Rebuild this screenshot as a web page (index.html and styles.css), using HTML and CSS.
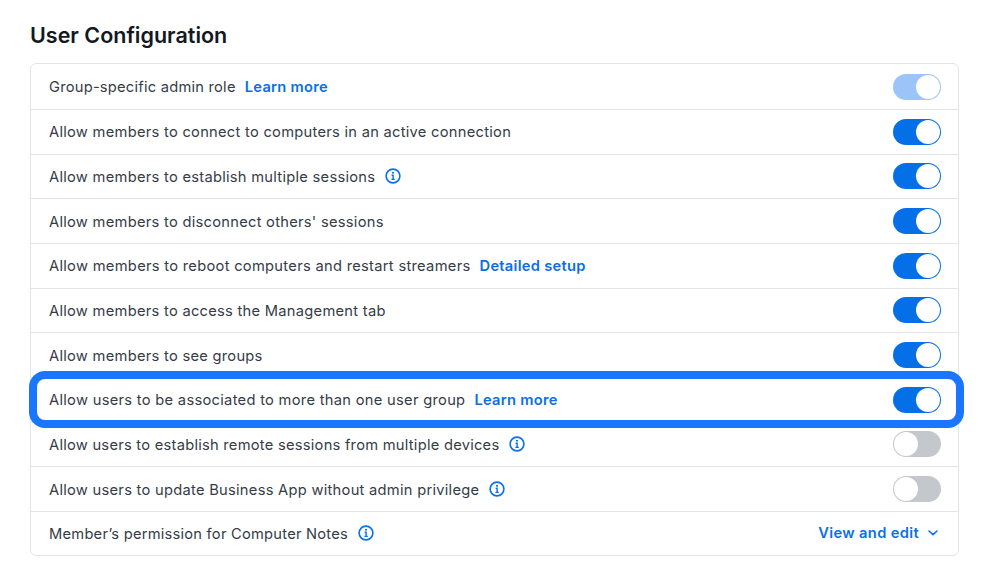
FILE: index.html
```html
<!DOCTYPE html>
<html lang="en">
<head>
<meta charset="utf-8">
<title>User Configuration</title>
<link rel="stylesheet" href="styles.css">
</head>
<body>
<svg class="defs" width="0" height="0" aria-hidden="true">
  <symbol id="info" viewBox="0 0 16 16">
    <circle cx="8" cy="8" r="6.9" fill="none" stroke="currentColor" stroke-width="1.6"/>
    <circle cx="8" cy="4.8" r="1.05" fill="currentColor"/>
    <path d="M6.6 7.3H8.1V11.2M6.4 11.4H9.8" fill="none" stroke="currentColor" stroke-width="1.4"/>
  </symbol>
</svg>
<main class="page">
  <h1 class="title">User Configuration</h1>
  <section class="card">
    <div class="row"><span class="label narrow">Group-specific admin role</span><a class="link">Learn more</a><span class="toggle on dim"></span></div>
    <div class="row"><span class="label">Allow members to connect to computers in an active connection</span><span class="toggle on"></span></div>
    <div class="row"><span class="label">Allow members to establish multiple sessions</span><svg class="info"><use href="#info"/></svg><span class="toggle on"></span></div>
    <div class="row"><span class="label">Allow members to disconnect others' sessions</span><span class="toggle on"></span></div>
    <div class="row"><span class="label wide">Allow members to reboot computers and restart streamers</span><a class="link">Detailed setup</a><span class="toggle on"></span></div>
    <div class="row"><span class="label">Allow members to access the Management tab</span><span class="toggle on"></span></div>
    <div class="row"><span class="label">Allow members to see groups</span><span class="toggle on"></span></div>
    <div class="row highlighted"><span class="label wide">Allow users to be associated to more than one user group</span><a class="link">Learn more</a><span class="toggle on"></span></div>
    <div class="row"><span class="label slim">Allow users to establish remote sessions from multiple devices</span><svg class="info"><use href="#info"/></svg><span class="toggle"></span></div>
    <div class="row"><span class="label">Allow users to update Business App without admin privilege</span><svg class="info"><use href="#info"/></svg><span class="toggle"></span></div>
    <div class="row"><span class="label narrow">Member’s permission for Computer Notes</span><svg class="info"><use href="#info"/></svg>
      <a class="link action">View and edit<svg class="chevron" viewBox="0 0 10 6"><path d="M1 1l4 3.6L9 1" fill="none" stroke="currentColor" stroke-width="1.6" stroke-linecap="round" stroke-linejoin="round"/></svg></a></div>
  </section>
</main>
</body>
</html>
```
FILE: styles.css
```css
* { box-sizing: border-box; }
html, body { margin: 0; background: #fff; }
body { font-family: Inter, "Liberation Sans", sans-serif; color: #363c47; }
.defs { position: absolute; }
.page { width: 1001px; height: 585px; padding: 21px 42px 0 30px; }
.title { margin: 0 0 14px; font-size: 21.5px; line-height: 28px; font-weight: 600; color: #14181f; }
.card { border: 1px solid #e1e4e9; border-radius: 6px; }
.row { height: 44.67px; display: flex; align-items: center; padding: 0 17px 0 18px; border-bottom: 1px solid #e1e4e9; position: relative; }
.row:first-child { height: 46px; }
.row:last-child { border-bottom: 0; height: 43px; }
.label { padding-top: 1.2px; font-size: 14.7px; line-height: 20px; letter-spacing: 0.27px; }
.label.narrow { letter-spacing: 0.23px; }
.label.slim { letter-spacing: 0.25px; }
.label.wide { letter-spacing: 0.29px; }
.link { margin-left: 9px; padding-top: 1.2px; font-size: 14.7px; line-height: 20px; font-weight: 600; letter-spacing: 0.27px; color: #0b6fe8; }
.info { width: 16px; height: 16px; margin-left: 10px; color: #0b6fe8; }
.toggle { margin-left: auto; width: 48px; height: 26px; border-radius: 13px; background: #c4c7cc; position: relative; }
.toggle::after { content: ""; position: absolute; top: 1px; left: 1px; width: 24px; height: 24px; border-radius: 50%; background: #fff; }
.toggle.on { background: #056fe8; }
.toggle.on::after { left: auto; right: 1px; }
.toggle.dim { background: #9bc5f8; }
.action { margin-left: auto; margin-right: 3px; padding-top: 0; display: flex; align-items: center; letter-spacing: 0.35px; color: #0b6fe8; }
.chevron { width: 10px; height: 6px; margin-left: 9px; }
.highlighted::after { content: ""; position: absolute; top: -7px; bottom: -6px; left: -2px; right: -6px; border: 8px solid #1a75ff; border-radius: 16px; pointer-events: none; }
```
